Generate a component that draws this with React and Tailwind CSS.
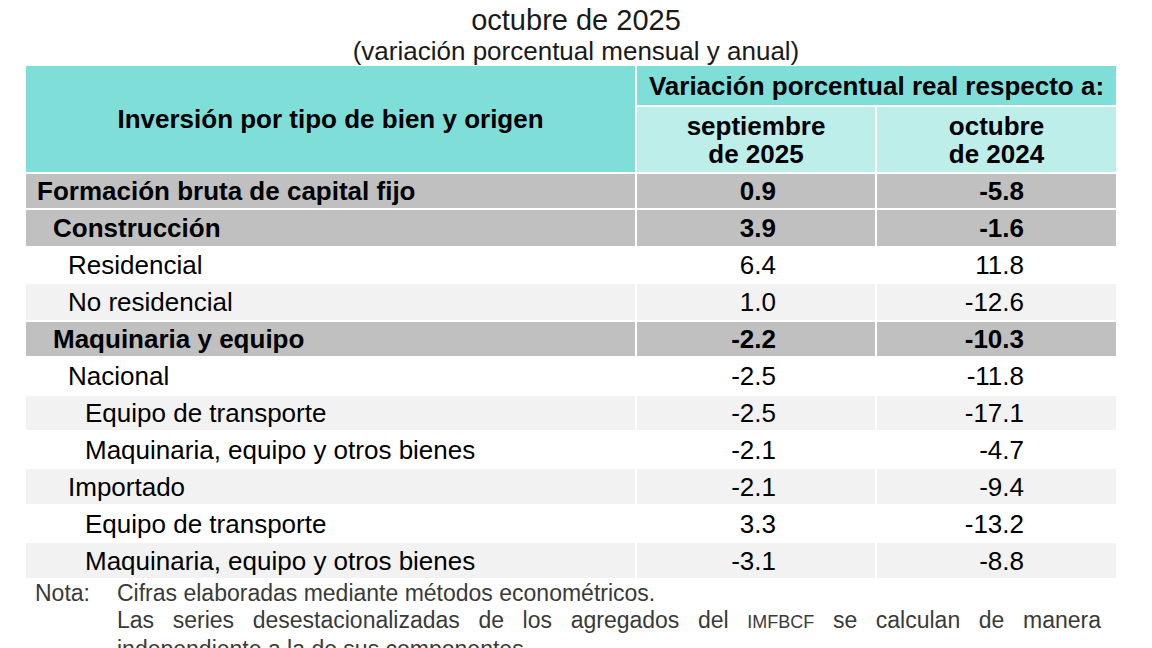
const ROWS = [
  { label: 'Formación bruta de capital fijo', a: '0.9', b: '-5.8', level: 0, kind: 'dark', h: 'h-[34px]' },
  { label: 'Construcción', a: '3.9', b: '-1.6', level: 1, kind: 'dark', h: 'h-[36px]' },
  { label: 'Residencial', a: '6.4', b: '11.8', level: 2, kind: 'white', h: 'h-[34px]' },
  { label: 'No residencial', a: '1.0', b: '-12.6', level: 2, kind: 'light', h: 'h-[36px]' },
  { label: 'Maquinaria y equipo', a: '-2.2', b: '-10.3', level: 1, kind: 'dark', h: 'h-[34px]' },
  { label: 'Nacional', a: '-2.5', b: '-11.8', level: 2, kind: 'white', h: 'h-[36px]' },
  { label: 'Equipo de transporte', a: '-2.5', b: '-17.1', level: 3, kind: 'light', h: 'h-[34px]' },
  { label: 'Maquinaria, equipo y otros bienes', a: '-2.1', b: '-4.7', level: 3, kind: 'white', h: 'h-[35px]' },
  { label: 'Importado', a: '-2.1', b: '-9.4', level: 2, kind: 'light', h: 'h-[35px]' },
  { label: 'Equipo de transporte', a: '3.3', b: '-13.2', level: 3, kind: 'white', h: 'h-[35px]' },
  { label: 'Maquinaria, equipo y otros bienes', a: '-3.1', b: '-8.8', level: 3, kind: 'light', h: 'h-[35px]' },
];

const INDENT = ['pl-[11px]', 'pl-[27px]', 'pl-[42px]', 'pl-[59px]'];
const BG = { dark: 'bg-[#c0c0c0]', light: 'bg-[#f2f2f2]', white: 'bg-white' };

function DataRow({ row }) {
  const bg = BG[row.kind];
  const weight = row.kind === 'dark' ? 'font-bold' : 'font-normal';
  return (
    <div className={`grid grid-cols-[609px_238px_239px] gap-[2px] mt-[2px] ${row.h} ${weight}`}>
      <div className={`${bg} ${INDENT[row.level]} flex items-center`}>{row.label}</div>
      <div className={`${bg} pr-[99px] flex items-center justify-end`}>{row.a}</div>
      <div className={`${bg} pr-[92px] flex items-center justify-end`}>{row.b}</div>
    </div>
  );
}

export default function App() {
  return (
    <div className="w-[1152px] h-[648px] overflow-hidden bg-white text-black font-['Liberation_Sans',Arial,sans-serif]">
      {/* title */}
      <div className="pt-[4px] text-center text-[#1a1a1a]">
        <div className="text-[29px] leading-[32px]">octubre de 2025</div>
        <div className="text-[26px] leading-[30px]">(variación porcentual mensual y anual)</div>
      </div>

      {/* table */}
      <div className="ml-[26px] w-[1090px] text-[26px] leading-none">
        <div className="grid grid-cols-[609px_238px_239px] grid-rows-[39px_65px] gap-[2px] font-bold">
          <div className="row-span-2 bg-[#80ded8] flex items-center justify-center">Inversión por tipo de bien y origen</div>
          <div className="col-span-2 bg-[#80ded8] flex items-center justify-center">Variación porcentual real respecto a:</div>
          <div className="bg-[#bdeeea] flex flex-col items-center justify-center leading-[28px]">
            <span>septiembre</span>
            <span>de 2025</span>
          </div>
          <div className="bg-[#bdeeea] flex flex-col items-center justify-center leading-[28px]">
            <span>octubre</span>
            <span>de 2024</span>
          </div>
        </div>
        {ROWS.map((r, i) => <DataRow key={i} row={r} />)}
      </div>

      {/* note */}
      <div className="mt-[2px] flex text-[23px] leading-[27px] text-[#3a3a3a]">
        <div className="pl-[35px] w-[117px] shrink-0">Nota:</div>
        <div className="w-[984px]">
          <div>Cifras elaboradas mediante métodos econométricos.</div>
          <div className="text-justify [text-align-last:justify]">
            Las series desestacionalizadas de los agregados del <span className="text-[18px]">IMFBCF</span> se calculan de manera
          </div>
          <div>independiente a la de sus componentes.</div>
        </div>
      </div>
    </div>
  );
}
